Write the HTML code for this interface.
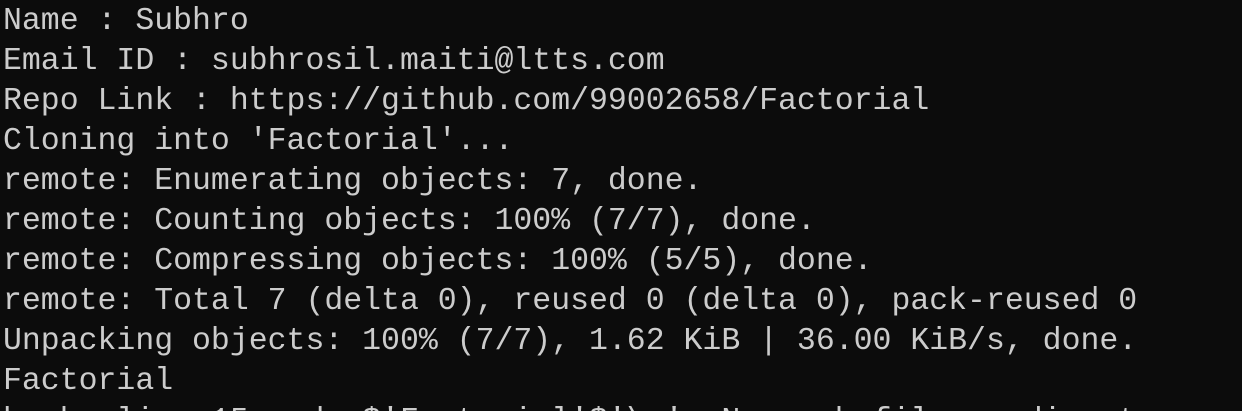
<!DOCTYPE html>
<html><head><meta charset="utf-8"><style>
html,body{margin:0;padding:0;background:#0c0c0c;width:1242px;height:411px;overflow:hidden}
pre{margin:0;padding:2px 0 0 3px;font-family:"Liberation Mono",monospace;font-size:31.5px;line-height:40px;color:#cccccc}
</pre>
</style></head><body><pre>Name : Subhro
Email ID : subhrosil.maiti@ltts.com
Repo Link : https://github.com/99002658/Factorial
Cloning into 'Factorial'...
remote: Enumerating objects: 7, done.
remote: Counting objects: 100% (7/7), done.
remote: Compressing objects: 100% (5/5), done.
remote: Total 7 (delta 0), reused 0 (delta 0), pack-reused 0
Unpacking objects: 100% (7/7), 1.62 KiB | 36.00 KiB/s, done.
Factorial
bash: line 15: cd: $'Factorial'$'\r': No such file or directory</pre></body></html>
